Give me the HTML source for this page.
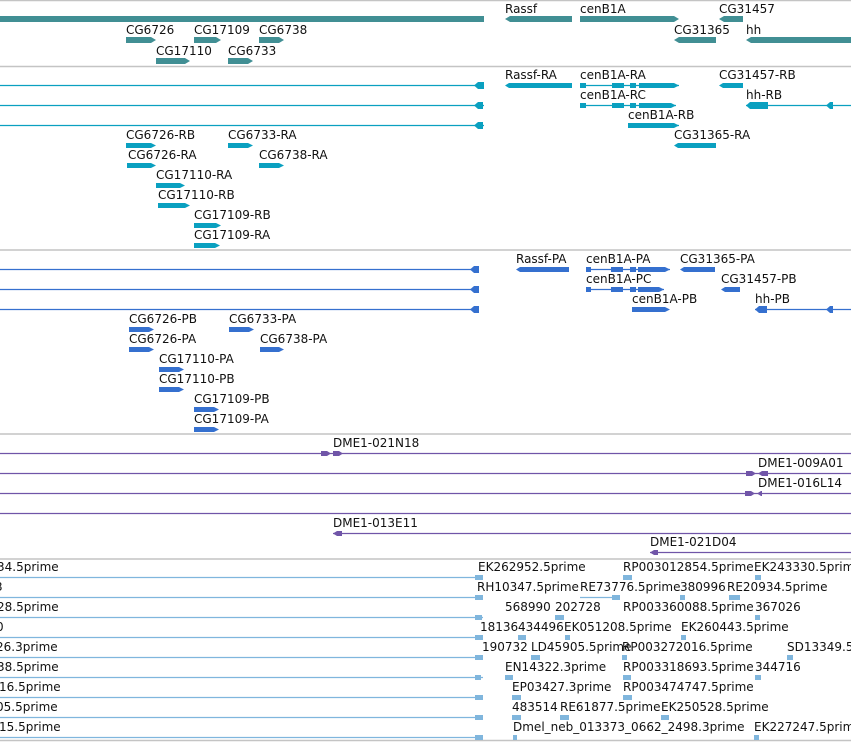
<!DOCTYPE html>
<html><head><meta charset="utf-8"><style>
html,body{margin:0;padding:0;background:#fff;overflow:hidden}
svg{display:block}
text{font-family:"DejaVu Sans","Liberation Sans",sans-serif;font-size:12px;fill:#111}
</style></head><body>
<svg width="851" height="742" viewBox="0 0 851 742" xmlns="http://www.w3.org/2000/svg">
<!-- separators -->
<g stroke="#c4c4c4" stroke-width="1.5">
<line x1="0" y1="0.5" x2="851" y2="0.5"/><line x1="0" y1="66.5" x2="851" y2="66.5"/>
<line x1="0" y1="250" x2="851" y2="250"/><line x1="0" y1="434" x2="851" y2="434"/>
<line x1="0" y1="559" x2="851" y2="559"/><line x1="0" y1="740.5" x2="851" y2="740.5"/>
</g>
<!-- Track 1 genes -->
<g fill="#418f94">
<rect x="0" y="16" width="484" height="6"/>
<polygon points="510,16 572,16 572,22 510,22 505,19"/>
<polygon points="580,16 674,16 679,19 674,22 580,22"/>
<polygon points="724,16 743,16 743,22 724,22 719,19"/>
<polygon points="126,37 151,37 156,40 151,43 126,43"/>
<polygon points="194,37 216,37 221,40 216,43 194,43"/>
<polygon points="259,37 279,37 284,40 279,43 259,43"/>
<polygon points="679,37 716,37 716,43 679,43 674,40"/>
<polygon points="751,37 851,37 851,43 751,43 746,40"/>
<polygon points="156,58 185,58 190,61 185,64 156,64"/>
<polygon points="228,58 248,58 253,61 248,64 228,64"/>
</g>
<text x="505" y="13">Rassf</text><text x="580" y="13">cenB1A</text><text x="719" y="13">CG31457</text>
<text x="126" y="34">CG6726</text><text x="194" y="34">CG17109</text><text x="259" y="34">CG6738</text>
<text x="674" y="34">CG31365</text><text x="746" y="34">hh</text>
<text x="156" y="55">CG17110</text><text x="228" y="55">CG6733</text>

<!-- Track 2 transcripts (cyan) -->
<g stroke="#0aa0c0" stroke-width="1.2">
<line x1="0" y1="85.5" x2="484" y2="85.5"/><line x1="0" y1="105.5" x2="484" y2="105.5"/><line x1="0" y1="125.5" x2="484" y2="125.5"/>
<line x1="580" y1="85.5" x2="679" y2="85.5"/><line x1="580" y1="105.5" x2="676" y2="105.5"/>
<line x1="746" y1="105.5" x2="851" y2="105.5"/><line x1="628" y1="125.5" x2="679" y2="125.5"/>
</g>
<g fill="#0aa0c0">
<polygon points="478,82 484,82 484,89 478,89 474,85.5"/>
<polygon points="478,102 483,102 483,109 478,109 474,105.5"/>
<polygon points="478,122 483,122 483,129 478,129 474,125.5"/>
<polygon points="509,83 572,83 572,88 509,88 505,85.5"/>
<rect x="580" y="83" width="6" height="5"/><rect x="612" y="83" width="12" height="5"/><rect x="630" y="83" width="6" height="5"/>
<polygon points="639,83 674,83 679,85.5 674,88 639,88"/>
<polygon points="723,83 743,83 743,88 723,88 719,85.5"/>
<rect x="580" y="103" width="6" height="5"/><rect x="612" y="103" width="12" height="5"/><rect x="630" y="103" width="6" height="5"/>
<polygon points="639,103 671,103 676,105.5 671,108 639,108"/>
<polygon points="750,102 768,102 768,109 750,109 746,105.5"/>
<polygon points="830,102 833,102 833,109 830,109 826,105.5"/>
<polygon points="628,123 674,123 679,125.5 674,128 628,128"/>
<polygon points="126,143 151,143 156,145.5 151,148 126,148"/>
<polygon points="228,143 248,143 253,145.5 248,148 228,148"/>
<polygon points="678,143 716,143 716,148 678,148 674,145.5"/>
<polygon points="127,163 151,163 156,165.5 151,168 127,168"/>
<polygon points="259,163 279,163 284,165.5 279,168 259,168"/>
<polygon points="156,183 180,183 185,185.5 180,188 156,188"/>
<polygon points="158,203 185,203 190,205.5 185,208 158,208"/>
<polygon points="194,223 216,223 221,225.5 216,228 194,228"/>
<polygon points="194,243 215,243 220,245.5 215,248 194,248"/>
</g>
<text x="505" y="79">Rassf-RA</text><text x="580" y="79">cenB1A-RA</text><text x="719" y="79">CG31457-RB</text>
<text x="580" y="99">cenB1A-RC</text><text x="746" y="99">hh-RB</text>
<text x="628" y="119">cenB1A-RB</text>
<text x="126" y="139">CG6726-RB</text><text x="228" y="139">CG6733-RA</text><text x="674" y="139">CG31365-RA</text>
<text x="128" y="159">CG6726-RA</text><text x="259" y="159">CG6738-RA</text>
<text x="156" y="179">CG17110-RA</text><text x="158" y="199">CG17110-RB</text>
<text x="194" y="219">CG17109-RB</text><text x="194" y="239">CG17109-RA</text>

<!-- Track 3 proteins (blue) -->
<g stroke="#3570cf" stroke-width="1.2">
<line x1="0" y1="269.5" x2="479" y2="269.5"/><line x1="0" y1="289.5" x2="479" y2="289.5"/><line x1="0" y1="309.5" x2="479" y2="309.5"/>
<line x1="586" y1="269.5" x2="670" y2="269.5"/><line x1="586" y1="289.5" x2="664" y2="289.5"/>
<line x1="755" y1="309.5" x2="851" y2="309.5"/>
</g>
<g fill="#3570cf">
<polygon points="474,266 479,266 479,273 474,273 470,269.5"/>
<polygon points="474,286 479,286 479,293 474,293 470,289.5"/>
<polygon points="474,306 479,306 479,313 474,313 470,309.5"/>
<polygon points="520,267 569,267 569,272 520,272 516,269.5"/>
<rect x="586" y="267" width="5" height="5"/><rect x="611" y="267" width="12" height="5"/><rect x="630" y="267" width="6" height="5"/>
<polygon points="638,267 665,267 670,269.5 665,272 638,272"/>
<polygon points="684,267 715,267 715,272 684,272 680,269.5"/>
<rect x="586" y="287" width="5" height="5"/><rect x="611" y="287" width="12" height="5"/><rect x="630" y="287" width="6" height="5"/>
<polygon points="638,287 659,287 664,289.5 659,292 638,292"/>
<polygon points="725,287 740,287 740,292 725,292 721,289.5"/>
<polygon points="632,307 665,307 670,309.5 665,312 632,312"/>
<polygon points="759,306 767,306 767,313 759,313 755,309.5"/>
<polygon points="830,306 833,306 833,313 830,313 826,309.5"/>
<polygon points="129,327 149,327 154,329.5 149,332 129,332"/>
<polygon points="229,327 249,327 254,329.5 249,332 229,332"/>
<polygon points="129,347 149,347 154,349.5 149,352 129,352"/>
<polygon points="260,347 279,347 284,349.5 279,352 260,352"/>
<polygon points="159,367 179,367 184,369.5 179,372 159,372"/>
<polygon points="159,387 179,387 184,389.5 179,392 159,392"/>
<polygon points="194,407 214,407 219,409.5 214,412 194,412"/>
<polygon points="194,427 214,427 219,429.5 214,432 194,432"/>
</g>
<text x="516" y="263">Rassf-PA</text><text x="586" y="263">cenB1A-PA</text><text x="680" y="263">CG31365-PA</text>
<text x="586" y="283">cenB1A-PC</text><text x="721" y="283">CG31457-PB</text>
<text x="632" y="303">cenB1A-PB</text><text x="755" y="303">hh-PB</text>
<text x="129" y="323">CG6726-PB</text><text x="229" y="323">CG6733-PA</text>
<text x="129" y="343">CG6726-PA</text><text x="260" y="343">CG6738-PA</text>
<text x="159" y="363">CG17110-PA</text><text x="159" y="383">CG17110-PB</text>
<text x="194" y="403">CG17109-PB</text><text x="194" y="423">CG17109-PA</text>

<!-- Track 4 (purple) -->
<g stroke="#7055a8" stroke-width="1.2">
<line x1="0" y1="453.5" x2="851" y2="453.5"/><line x1="0" y1="473.5" x2="851" y2="473.5"/>
<line x1="0" y1="493.5" x2="851" y2="493.5"/><line x1="0" y1="513.5" x2="851" y2="513.5"/>
<line x1="333" y1="533.5" x2="851" y2="533.5"/><line x1="650" y1="552.5" x2="851" y2="552.5"/>
</g>
<g fill="#7055a8">
<polygon points="321,451 327,451 331,453.5 327,456 321,456"/>
<polygon points="333,451 339,451 343,453.5 339,456 333,456"/>
<polygon points="746,471 752,471 756,473.5 752,476 746,476"/>
<polygon points="762,471 768,471 768,476 762,476 758,473.5"/>
<polygon points="745,491 751,491 755,493.5 751,496 745,496"/>
<polygon points="761,491 762,491 762,496 761,496 757,493.5"/>
<polygon points="337,531 342,531 342,536 337,536 333,533.5"/>
<polygon points="654,550 658,550 658,555 654,555 650,552.5"/>
</g>
<text x="333" y="447">DME1-021N18</text><text x="758" y="467">DME1-009A01</text>
<text x="758" y="487">DME1-016L14</text><text x="333" y="527">DME1-013E11</text>
<text x="650" y="546">DME1-021D04</text>

<!-- Track 5 (light blue ESTs) -->
<g stroke="#80b6dd" stroke-width="1.2">
<line x1="0" y1="577.5" x2="483" y2="577.5"/><line x1="0" y1="597.5" x2="483" y2="597.5"/>
<line x1="0" y1="617.5" x2="483" y2="617.5"/><line x1="0" y1="637.5" x2="483" y2="637.5"/>
<line x1="0" y1="657.5" x2="483" y2="657.5"/><line x1="0" y1="677.5" x2="483" y2="677.5"/>
<line x1="0" y1="697.5" x2="483" y2="697.5"/><line x1="0" y1="717.5" x2="483" y2="717.5"/>
<line x1="0" y1="737.5" x2="483" y2="737.5"/>
<line x1="580" y1="597.5" x2="612" y2="597.5"/>
</g>
<g fill="#80b6dd">
<rect x="475" y="575" width="8" height="5"/><rect x="475" y="595" width="8" height="5"/><rect x="475" y="615" width="7" height="5"/>
<rect x="475" y="635" width="8" height="5"/><rect x="475" y="655" width="8" height="5"/><rect x="475" y="675" width="6" height="5"/>
<rect x="475" y="695" width="8" height="5"/><rect x="475" y="715" width="8" height="5"/><rect x="475" y="735" width="8" height="5"/>
<rect x="623" y="575" width="9" height="5"/><rect x="755" y="575" width="6" height="5"/>
<rect x="612" y="595" width="8" height="5"/><rect x="680" y="595" width="5" height="5"/><rect x="729" y="595" width="11" height="5"/>
<rect x="555" y="615" width="9" height="5"/><rect x="755" y="615" width="5" height="5"/>
<rect x="518" y="635" width="8" height="5"/><rect x="565" y="635" width="5" height="5"/><rect x="681" y="635" width="5" height="5"/>
<rect x="531" y="655" width="9" height="5"/><rect x="622" y="655" width="5" height="5"/><rect x="787" y="655" width="6" height="5"/>
<rect x="505" y="675" width="8" height="5"/><rect x="623" y="675" width="8" height="5"/><rect x="755" y="675" width="6" height="5"/>
<rect x="512" y="695" width="9" height="5"/><rect x="623" y="695" width="9" height="5"/>
<rect x="512" y="715" width="9" height="5"/><rect x="560" y="715" width="9" height="5"/><rect x="661" y="715" width="8" height="5"/>
<rect x="513" y="735" width="4" height="5"/><rect x="754" y="735" width="5" height="5"/>
</g>
<text x="-3" y="571">34.5prime</text><text x="478" y="571">EK262952.5prime</text><text x="623" y="571">RP003012854.5prime</text><text x="754" y="571">EK243330.5prime</text>
<text x="-5" y="591">3</text><text x="477" y="591">RH10347.5prime</text><text x="580" y="591">RE73776.5prime</text><text x="680" y="591">380996</text><text x="727" y="591">RE20934.5prime</text>
<text x="-3" y="611">28.5prime</text><text x="505" y="611">568990</text><text x="555" y="611">202728</text><text x="623" y="611">RP003360088.5prime</text><text x="755" y="611">367026</text>
<text x="-4" y="631">0</text><text x="480" y="631">18136</text><text x="518" y="631">434496</text><text x="564" y="631">EK051208.5prime</text><text x="681" y="631">EK260443.5prime</text>
<text x="-4" y="651">26.3prime</text><text x="482" y="651">190732</text><text x="531" y="651">LD45905.5prime</text><text x="622" y="651">RP003272016.5prime</text><text x="787" y="651">SD13349.5</text>
<text x="-3" y="671">38.5prime</text><text x="505" y="671">EN14322.3prime</text><text x="623" y="671">RP003318693.5prime</text><text x="755" y="671">344716</text>
<text x="-1" y="691">16.5prime</text><text x="512" y="691">EP03427.3prime</text><text x="623" y="691">RP003474747.5prime</text>
<text x="-4" y="711">05.5prime</text><text x="512" y="711">483514</text><text x="560" y="711">RE61877.5prime</text><text x="661" y="711">EK250528.5prime</text>
<text x="-1" y="731">15.5prime</text><text x="513" y="731">Dmel_neb_013373_0662_2498.3prime</text><text x="754" y="731">EK227247.5prime</text>
</svg>
</body></html>
